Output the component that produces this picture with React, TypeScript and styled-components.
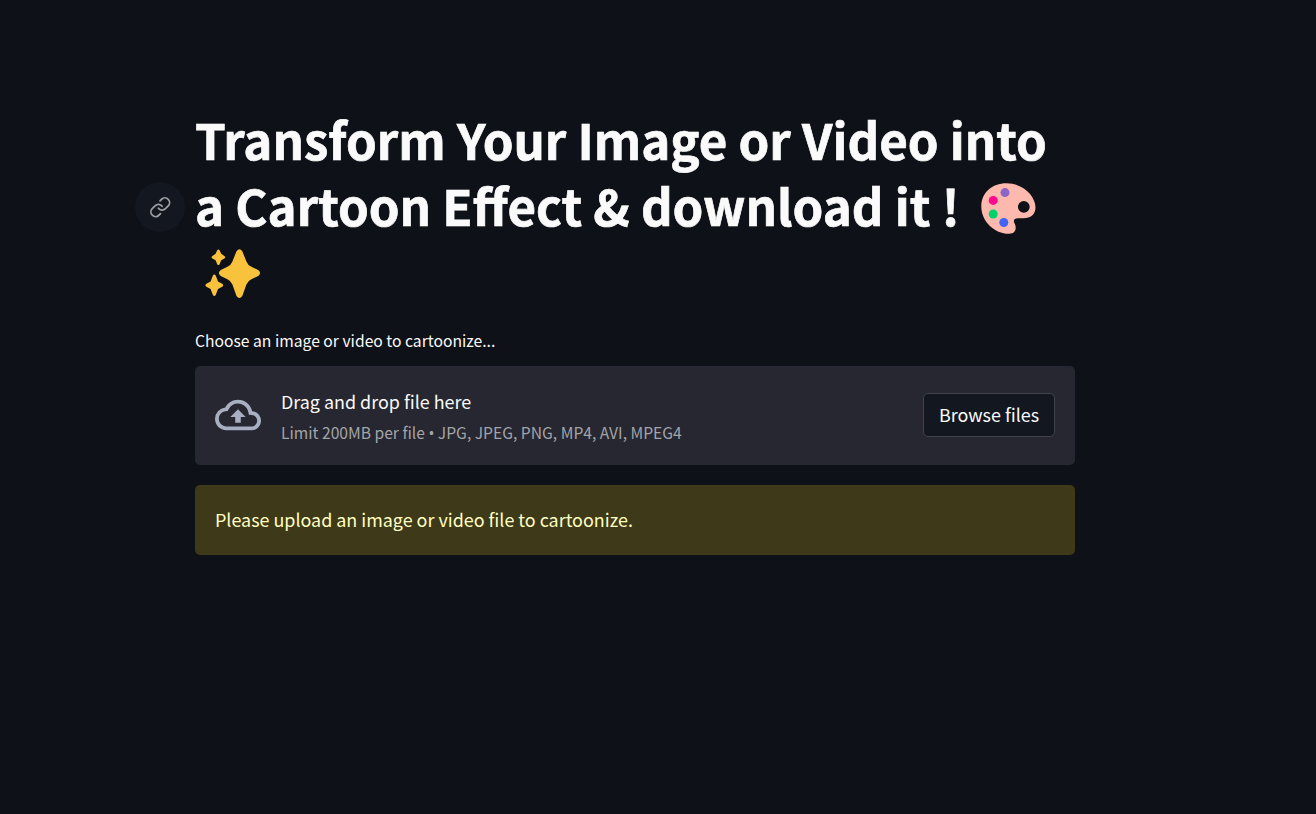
import React from "react";
import styled, { createGlobalStyle } from "styled-components";
import { MdOutlineCloudUpload } from "react-icons/md";

const GlobalStyle = createGlobalStyle`
  * { box-sizing: border-box; }
  body {
    margin: 0;
    background: #0e1117;
    color: #fafafa;
    font-family: "Noto Sans CJK SC", "Noto Sans", sans-serif;
    font-size: 17.92px;
  }
`;

const Page = styled.main`
  min-height: 814px;
  padding: 106px 241px 0 195px;
`;

const Title = styled.h1`
  position: relative;
  margin: 0;
  font-size: 49.24px;
  font-weight: 700;
  line-height: 66px;
  -webkit-text-stroke: 0.7px #fafafa;
`;

const TitleLine = styled.span`
  display: flex;
  height: 66px;
  white-space: pre;
`;

const Emoji = styled.svg<{ $gap?: number }>`
  flex: none;
  width: 75px;
  height: 66px;
  margin-top: 3px;
  margin-left: ${(p) => p.$gap ?? 0}px;
`;

const Anchor = styled.a`
  position: absolute;
  left: -60px;
  top: 76px;
  width: 50px;
  height: 50px;
  border-radius: 50%;
  background: #131720;
  display: flex;
  align-items: center;
  justify-content: center;
`;

const Label = styled.label`
  display: block;
  margin-top: 24px;
  height: 38px;
  font-size: 15.68px;
  line-height: 26px;
`;

const Dropzone = styled.section`
  display: flex;
  align-items: center;
  gap: 20px;
  height: 99px;
  padding: 0 20px 2px;
  border-radius: 5px;
  background: #262730;
`;

const CloudIcon = styled(MdOutlineCloudUpload)`
  flex: none;
  width: 46px;
  height: 46px;
  color: #a9afc3;
`;

const Instructions = styled.div`
  flex: 1;
  display: flex;
  flex-direction: column;
  gap: 2px;
  padding-top: 2px;
`;

const Prompt = styled.span`
  line-height: 32px;
`;

const Limit = styled.span`
  font-size: 15.65px;
  line-height: 28px;
  color: #a3a4a8;
`;

const Bullet = styled.span`
  font-family: "Noto Sans", sans-serif;
  line-height: 1;
`;

const BrowseButton = styled.button`
  width: 132px;
  height: 44px;
  padding: 0 0 2px;
  border: 1px solid #41434b;
  border-radius: 5px;
  background: #131720;
  color: #fafafa;
  font: inherit;
  line-height: 32px;
  white-space: nowrap;
`;

const Alert = styled.div`
  display: flex;
  align-items: center;
  height: 70px;
  margin-top: 20px;
  padding: 0 20px 2px;
  border-radius: 5px;
  background: #3e3918;
  color: #ffffc2;
`;

const LinkIcon = () => (
  <svg width="22.5" height="22.5" viewBox="0 0 24 24" fill="none" stroke="#9c9ea2" strokeWidth="1.9" strokeLinecap="round" strokeLinejoin="round">
    <path d="M10 13a5 5 0 0 0 7.54.54l3-3a5 5 0 0 0-7.07-7.07l-1.72 1.71" />
    <path d="M14 11a5 5 0 0 0-7.54-.54l-3 3a5 5 0 0 0 7.07 7.07l1.71-1.71" />
  </svg>
);

const Palette = ({ gap }: { gap: number }) => (
  <Emoji $gap={gap} viewBox="0 0 75 66" role="img" aria-label="palette">
    <path
      fill="#fdb9ad"
      fillRule="evenodd"
      d="M11.3 31.5C11.3 17.5 22 8.2 36.5 8.2C53 8.2 65.5 21 65.5 32.5C65.5 39.5 60.5 43.2 53.5 43.2L48 43.2C44.4 43.2 43 45 44.4 48C46.8 52.4 46.3 58.8 39 58.8C24.5 58.8 11.3 46.5 11.3 31.5ZM53.8 25.9a5.9 5.9 0 1 0 0 11.8a5.9 5.9 0 1 0 0-11.8Z"
    />
    <circle cx="35" cy="17.6" r="4.5" fill="#8d65c5" />
    <circle cx="23.2" cy="25.4" r="4.5" fill="#ff0a8c" />
    <circle cx="23.2" cy="39" r="4.5" fill="#00d26a" />
    <circle cx="33.8" cy="47.5" r="4.5" fill="#4363fd" />
  </Emoji>
);

const Sparkles = () => (
  <Emoji viewBox="0 0 75 66" role="img" aria-label="sparkles" fill="#f9c23c">
    <path d="M41.5 10.2Q44.4 6.2 47.3 10.2L51.4 20.5Q52.8 24.2 56.4 25.8L63.2 29.1Q67 32 63.2 34.9L56.4 38.2Q52.8 39.8 51.4 43.5L47.3 54.9Q44.4 59.1 41.5 54.9L37.4 43.5Q36 39.8 32.4 38.2L25.8 34.9Q22 32 25.8 29.1L32.4 25.8Q36 24.2 37.4 20.5Z" />
    <path d="M22.2 9.2Q23.4 7.6 24.6 9.2L26.2 12.8L29.4 14.9Q31.2 16.2 29.4 17.4L26.2 19.2L24.6 23.2Q23.4 25 22.2 23.2L20.6 19.2L17.4 17.4Q15.6 16.2 17.4 14.9L20.6 12.8Z" />
    <path d="M17.9 34.4Q19.3 32.4 20.7 34.4L23 40.4L27.2 42.8Q29.2 44.3 27.2 45.8L23 48L20.7 53.9Q19.3 56 17.9 53.9L15.6 48L11.4 45.8Q9.4 44.3 11.4 42.8L15.6 40.4Z" />
  </Emoji>
);

const ACCEPTED = ["JPG", "JPEG", "PNG", "MP4", "AVI", "MPEG4"];

export default function App() {
  return (
    <>
      <GlobalStyle />
      <Page>
        <Title>
          <Anchor href="#transform" aria-label="Link to heading">
            <LinkIcon />
          </Anchor>
          <TitleLine>Transform Your Image or Video into</TitleLine>
          <TitleLine>
            a Cartoon Effect &amp; download it !<Palette gap={10} />
          </TitleLine>
          <TitleLine>
            <Sparkles />
          </TitleLine>
        </Title>
        <Label>Choose an image or video to cartoonize...</Label>
        <Dropzone>
          <CloudIcon />
          <Instructions>
            <Prompt>Drag and drop file here</Prompt>
            <Limit>
              Limit 200MB per file <Bullet>•</Bullet> {ACCEPTED.join(", ")}
            </Limit>
          </Instructions>
          <BrowseButton>Browse files</BrowseButton>
        </Dropzone>
        <Alert>Please upload an image or video file to cartoonize.</Alert>
      </Page>
    </>
  );
}
